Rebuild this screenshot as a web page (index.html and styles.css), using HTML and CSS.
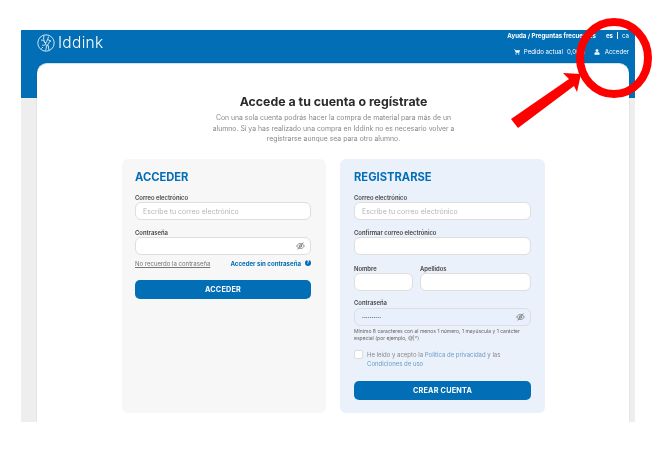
FILE: index.html
```html
<!DOCTYPE html>
<html lang="es">
<head>
<meta charset="utf-8">
<title>Iddink</title>
<link rel="stylesheet" href="styles.css">
</head>
<body>
<div class="frame">
  <header class="topbar">
    <div class="brand">
      <svg class="logo" viewBox="0 0 18 18" aria-hidden="true"><circle cx="9" cy="9" r="8.2"/><path d="M7 1.500C6 5 7 7 8.500 9.500S9.500 14 8.500 16.500M11.500 2.500C11 5 10 7 8.500 9.500M4 6c1.500 0 3 .5 4.500 3.500M13.500 6.500c-1 1.500-2 2.500-3.500 5.500M11 11l1 5M5 11c1 .5 2 .5 3.500-.5M11 5.500l3 2M6 13l-1.500 1.500"/></svg>
      <span class="brand-name">Iddink</span>
    </div>
    <div class="top-links">
      <div class="top-row">
        <span class="help">Ayuda / Preguntas frecuentes</span>
        <span class="lang"><b>es</b><i></i>ca</span>
      </div>
      <div class="top-row second">
        <svg class="mini" viewBox="0 0 12 12" aria-hidden="true"><path d="M0 1h2.200l.5 1.500H12l-1.500 5H3.500L1.500 2H0zM4 8.500a1.300 1.300 0 1 0 .01 0zM9.500 8.500a1.300 1.300 0 1 0 .01 0z"/></svg>
        <span class="order">Pedido actual</span><span class="amount">0,00 €</span>
        <svg class="mini user" viewBox="0 0 12 12" aria-hidden="true"><circle cx="6" cy="3.200" r="2.800"/><path d="M1 11.500V9c0-1.500 1.500-2.500 3-2.500h4c1.500 0 3 1 3 2.500v2.500z"/></svg>
        <span>Acceder</span>
      </div>
    </div>
  </header>
  <main class="card">
    <h1>Accede a tu cuenta o regístrate</h1>
    <p class="intro">Con una sola cuenta podrás hacer la compra de material para más de un alumno. Si ya has realizado una compra en Iddink no es necesario volver a registrarse aunque sea para otro alumno.</p>
    <div class="panels">
      <section class="panel login">
        <h2>ACCEDER</h2>
        <label class="lbl first">Correo electrónico</label>
        <div class="field ph">Escribe tu correo electrónico</div>
        <label class="lbl">Contraseña</label>
        <div class="field pw">
          <svg class="eye" viewBox="0 0 14 12" aria-hidden="true"><path d="M1 6c1.500-2.500 3.500-4 6-4s4.500 1.500 6 4c-1.500 2.500-3.500 4-6 4S2.500 8.500 1 6z"/><circle cx="7" cy="6" r="2"/><path d="M2.500 11.500l9-11"/></svg>
        </div>
        <div class="links">
          <a class="forgot">No recuerdo la contraseña</a>
          <a class="nopass">Acceder sin contraseña</a>
          <span class="info">?</span>
        </div>
        <button class="btn first">ACCEDER</button>
      </section>
      <section class="panel register">
        <h2>REGISTRARSE</h2>
        <label class="lbl first">Correo electrónico</label>
        <div class="field ph">Escribe tu correo electrónico</div>
        <label class="lbl">Confirmar correo electrónico</label>
        <div class="field"></div>
        <div class="names">
          <div class="name-a"><label class="lbl first">Nombre</label><div class="field"></div></div>
          <div class="name-b"><label class="lbl first">Apellidos</label><div class="field"></div></div>
        </div>
        <label class="lbl pass">Contraseña</label>
        <div class="field pw filled">
          <span class="dots">••••••••••</span>
          <svg class="eye" viewBox="0 0 14 12" aria-hidden="true"><path d="M1 6c1.500-2.500 3.500-4 6-4s4.500 1.500 6 4c-1.500 2.500-3.500 4-6 4S2.500 8.500 1 6z"/><circle cx="7" cy="6" r="2"/><path d="M2.500 11.500l9-11"/></svg>
        </div>
        <p class="hint">Mínimo 8 caracteres con al menos 1 número, 1 mayúscula y 1 carácter especial (por ejemplo, @|*)</p>
        <div class="consent">
          <span class="check"></span>
          <p>He leído y acepto la <a>Política de privacidad</a> y las <a class="terms">Condiciones de uso</a></p>
        </div>
        <button class="btn">CREAR CUENTA</button>
      </section>
    </div>
  </main>
</div>
<svg class="annotation" viewBox="0 0 655 451" aria-hidden="true">
  <ellipse cx="614" cy="58" rx="34" ry="36"/>
  <polygon points="511,119 518,128 574,86 577,92 581,74 563,73 569,79"/>
</svg>
</body>
</html>
```
FILE: styles.css
```css
* { box-sizing: border-box; }
html, body { margin: 0; height: 100%; }
body {
  background: #fff;
  padding: 30px 20px 29px 21px;
  font-family: Inter, "Open Sans", sans-serif;
  color: #333;
  overflow: hidden;
}
.frame {
  height: 392px;
  background: #eee;
  overflow: hidden;
  filter: blur(0.35px);
}
.topbar {
  height: 68px;
  background: #026eb6;
  color: #fff;
  display: flex;
  justify-content: space-between;
  padding: 2px 6px 0 16px;
  font-size: 6.100px;
}
.brand { display: flex; align-items: flex-start; gap: 3px; }
.logo { width: 18px; height: 18px; margin-top: 2px; fill: none; stroke: #e4f0f8; stroke-width: 0.9; }
.brand-name { font-size: 15.500px; line-height: 22px; font-weight: 300; letter-spacing: 0.3px; }
.top-links { display: flex; flex-direction: column; align-items: flex-end; gap: 9px; }
.top-row { display: flex; align-items: center; height: 7px; }
.help { font-weight: 700; }
.lang { display: flex; align-items: center; margin-left: 10px; gap: 3px; }
.lang i { width: 1px; height: 7px; background: #fff; margin: 0 1px; }
.mini { width: 6px; height: 6px; fill: #fff; margin-right: 4px; }
.user { margin-left: 8px; margin-right: 5px; }
.amount { margin-left: 4px; }
.card {
  margin: -35px 6px 0 16px;
  height: 359px;
  background: #fff;
  border-radius: 10px 10px 0 0;
  border-top: 1px solid #cfe2f0;
  box-shadow: 0 0 2px rgba(0, 0, 0, 0.12);
  padding: 31px 84px 0 85px;
}
h1 {
  margin: 0;
  text-align: center;
  font-size: 12.350px;
  line-height: 14px;
  font-weight: 700;
  color: #2b2b2b;
}
.intro {
  margin: 4px auto 0;
  width: 250px;
  text-align: center;
  font-size: 6.870px;
  line-height: 10.700px;
  color: #8a8a8a;
}
.panels { display: flex; gap: 14px; margin-top: 14px; }
.panel {
  width: 204px;
  height: 254px;
  border-radius: 6px;
  padding: 12px 15px 0 13px;
  background: #f7f7f7;
}
.register { width: 205px; background: #ebf1fa; padding-left: 14px; padding-right: 14px; }
h2 {
  margin: 0;
  font-size: 11.200px;
  line-height: 13px;
  font-weight: 700;
  color: #026eb6;
}
.lbl {
  display: block;
  font-size: 5.900px;
  line-height: 7px;
  font-weight: 600;
  color: #444;
  margin-top: 8.500px;
  margin-bottom: 1.500px;
}
.lbl.first { margin-top: 9.500px; }
.lbl.pass { margin-top: 8px; margin-bottom: 2px; }
.field {
  height: 18px;
  background: #fff;
  border: 1px solid #dedede;
  border-radius: 6px;
  display: flex;
  align-items: center;
  padding: 0 7px;
  font-size: 7px;
}
.ph { color: #b5b5b5; }
.pw { justify-content: flex-end; padding: 0 5px; }
.filled { background: #e8f0fd; justify-content: space-between; padding: 0 5px 0 7px; }
.dots { font-size: 3.400px; color: #555; }
.eye { width: 9px; height: 8px; fill: none; stroke: #666; stroke-width: 1.100; }
.links { display: flex; align-items: center; margin-top: 4px; height: 8px; font-size: 6px; }
.forgot { color: #777; text-decoration: underline; }
.nopass { margin-left: auto; color: #026eb6; font-weight: 700; font-size: 6.100px; }
.info {
  margin-left: 4px;
  width: 6px;
  height: 6px;
  border-radius: 50%;
  background: #026eb6;
  color: #fff;
  font-size: 4.500px;
  line-height: 6px;
  text-align: center;
  font-weight: 700;
}
.btn {
  display: block;
  width: 100%;
  height: 19px;
  padding: 0;
  border: 0;
  border-radius: 5px;
  background: #026eb6;
  color: #fff;
  font: 700 7.250px Inter, sans-serif;
  letter-spacing: 0.2px;
}
.btn.first { margin-top: 13px; }
.names { display: flex; gap: 7px; }
.name-a { width: 59px; }
.name-b { flex: 1; }
.hint {
  margin: 2px 0 0;
  font-size: 5.050px;
  line-height: 6.500px;
  color: #666;
}
.consent { display: flex; gap: 4px; margin-top: 8.500px; }
.check {
  flex: none;
  width: 9px;
  height: 9px;
  margin-top: 0.500px;
  background: #fff;
  border: 1px solid #ddd;
  border-radius: 2px;
}
.consent p {
  margin: 0;
  font-size: 6px;
  line-height: 9.500px;
  color: #888;
}
.consent a { color: #6b9cc8; }
.terms { display: block; }
.register .btn { margin-top: 12.500px; }
.annotation {
  position: absolute;
  left: 0;
  top: 0;
  width: 655px;
  height: 451px;
}
.annotation ellipse { fill: none; stroke: #f00; stroke-width: 8; }
.annotation polygon { fill: #f00; }
```
